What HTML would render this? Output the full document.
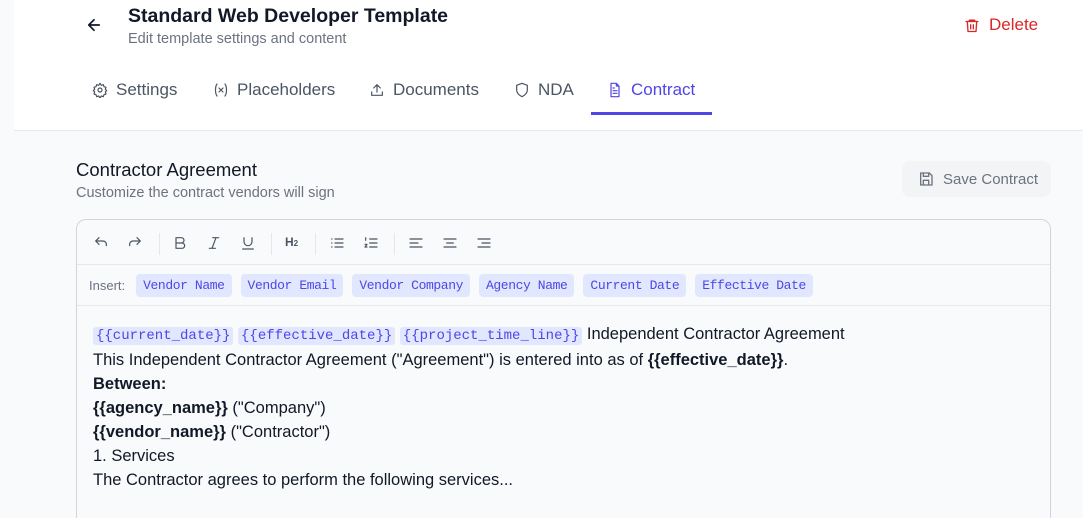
<!DOCTYPE html>
<html><head><style>
*{box-sizing:border-box;margin:0;padding:0}
html,body{width:1083px;height:518px;overflow:hidden}
body{background:#f9fafb;font-family:"Liberation Sans",sans-serif;position:relative}
.hdr{position:absolute;left:14px;top:0;width:1069px;height:131px;background:#fff;border-bottom:1px solid #e5e7eb}
.abs{position:absolute}
.tab{position:absolute;top:80px;font-size:17px;color:#4b5563;display:flex;align-items:center;gap:8px}
.tab svg{width:16px;height:16px;fill:none;stroke:currentColor;stroke-width:1.8;stroke-linecap:round;stroke-linejoin:round}
.ed{position:absolute;left:76px;top:219px;width:975px;height:310px;border:1px solid #d1d5db;border-radius:10px;background:#f9fafb;overflow:hidden}
.tb{height:45px;border-bottom:1px solid #e5e7eb;position:relative}
.tb svg{position:absolute;top:15px;width:16px;height:16px;fill:none;stroke:#4b5563;stroke-width:1.8;stroke-linecap:round;stroke-linejoin:round}
.sep{position:absolute;top:13px;width:1px;height:22px;background:#e5e7eb}
.ins{height:41px;border-bottom:1px solid #e5e7eb;position:relative;display:flex;align-items:center;padding-left:12px;gap:9px}
.chip{background:#e0e7ff;color:#4f46e5;font-family:"Liberation Mono",monospace;font-size:13px;letter-spacing:-0.4px;padding:4px 7px;border-radius:4px}
.ct{padding:16px 16px;font-size:16.5px;color:#111827;line-height:24px}
.ph{background:#e0e7ff;color:#4f46e5;font-family:"Liberation Mono",monospace;font-size:14px;padding:1px 3px;border-radius:3px}
</style></head><body>
<div class="hdr"></div>
<svg class="abs" style="left:85px;top:16px" width="18" height="18" viewBox="0 0 24 24" fill="none" stroke="#111827" stroke-width="2.2" stroke-linecap="round" stroke-linejoin="round"><path d="M19 12H5M12 19l-7-7 7-7"/></svg>
<div class="abs" style="left:128px;top:5px;font-size:19.5px;font-weight:bold;color:#111827">Standard Web Developer Template</div>
<div class="abs" style="left:128px;top:31px;font-size:14.5px;color:#6b7280">Edit template settings and content</div>
<div class="abs" style="left:964px;top:15px;font-size:17px;color:#dc2626;display:flex;align-items:center;gap:9px"><svg width="16" height="17" viewBox="0 0 24 24" fill="none" stroke="#dc2626" stroke-width="2" stroke-linecap="round" stroke-linejoin="round"><path d="M3 6h18M8 6V4h8v2M5 6l1 15h12l1-15M10 11v6M14 11v6"/></svg>Delete</div>

<div class="tab" style="left:92px"><svg viewBox="0 0 24 24"><circle cx="12" cy="12" r="3"/><path d="M12 2l2 3 3-1 1 3 3 1-1 3 2 2-2 2 1 3-3 1-1 3-3-1-2 3-2-3-3 1-1-3-3-1 1-3-2-2 2-2-1-3 3-1 1-3 3 1z"/></svg>Settings</div>
<div class="tab" style="left:213px"><svg viewBox="0 0 24 24"><path d="M6 3C3 7 3 17 6 21M18 3c3 4 3 14 0 18M9 9l6 6M15 9l-6 6"/></svg>Placeholders</div>
<div class="tab" style="left:369px"><svg viewBox="0 0 24 24"><path d="M4 15v5h16v-5M12 15V4M7 9l5-5 5 5"/></svg>Documents</div>
<div class="tab" style="left:514px"><svg viewBox="0 0 24 24"><path d="M12 2l8 3v7c0 5-4 8-8 10-4-2-8-5-8-10V5z"/></svg>NDA</div>
<div class="tab" style="left:607px;color:#4f46e5"><svg viewBox="0 0 24 24"><path d="M14 2H6v20h12V6zM14 2v4h4M9 13h6M9 17h6M9 9h2"/></svg>Contract</div>
<div class="abs" style="left:591px;top:112px;width:121px;height:3px;background:#4f46e5"></div>

<div class="abs" style="left:76px;top:159px;font-size:18.5px;color:#111827">Contractor Agreement</div>
<div class="abs" style="left:76px;top:185px;font-size:14.5px;color:#6b7280">Customize the contract vendors will sign</div>
<div class="abs" style="left:902px;top:161px;width:149px;height:36px;background:#f3f4f6;border-radius:8px;display:flex;align-items:center;gap:9px;padding-left:16px;font-size:15px;color:#6b7280"><svg width="16" height="16" viewBox="0 0 24 24" fill="none" stroke="#6b7280" stroke-width="2" stroke-linejoin="round"><path d="M4 3h13l4 4v14H4zM8 3v5h8V3M8 21v-7h8v7"/></svg>Save Contract</div>

<div class="ed">
<div class="tb">
<svg style="left:16px" viewBox="0 0 24 24"><path d="M9 14L4 9l5-5M4 9h11a5 5 0 0 1 5 5v2"/></svg>
<svg style="left:50px" viewBox="0 0 24 24"><path d="M15 14l5-5-5-5M20 9H9a5 5 0 0 0-5 5v2"/></svg>
<div class="sep" style="left:82px"></div>
<svg style="left:95px" viewBox="0 0 24 24"><path d="M6 4h8a4 4 0 0 1 0 8H6zM6 12h9a4 4 0 0 1 0 8H6z"/></svg>
<svg style="left:129px" viewBox="0 0 24 24"><path d="M10 4h9M5 20h9M15 4L9 20"/></svg>
<svg style="left:163px" viewBox="0 0 24 24"><path d="M6 4v6a6 6 0 0 0 12 0V4M4 21h16"/></svg>
<div class="sep" style="left:194px"></div>
<div style="position:absolute;left:208px;top:15px;font-size:12px;color:#4b5563;font-weight:bold">H<span style="font-size:8px">2</span></div>
<div class="sep" style="left:238px"></div>
<svg style="left:252px" viewBox="0 0 24 24"><path d="M9 6h12M9 12h12M9 18h12M4 6h.5M4 12h.5M4 18h.5"/></svg>
<svg style="left:286px" viewBox="0 0 24 24"><path d="M10 6h11M10 12h11M10 18h11M4 4v4M3 14h3l-3 4h3"/></svg>
<div class="sep" style="left:317px"></div>
<svg style="left:331px" viewBox="0 0 24 24"><path d="M3 6h18M3 12h12M3 18h18"/></svg>
<svg style="left:365px" viewBox="0 0 24 24"><path d="M3 6h18M7 12h10M3 18h18"/></svg>
<svg style="left:399px" viewBox="0 0 24 24"><path d="M3 6h18M9 12h12M3 18h18"/></svg>
</div>
<div class="ins"><span style="font-size:13px;color:#6b7280;margin-right:2px">Insert:</span><span class="chip">Vendor Name</span><span class="chip">Vendor Email</span><span class="chip">Vendor Company</span><span class="chip">Agency Name</span><span class="chip">Current Date</span><span class="chip">Effective Date</span></div>
<div class="ct">
<div><span class="ph">{{current_date}}</span> <span class="ph">{{effective_date}}</span> <span class="ph">{{project_time_line}}</span> Independent Contractor Agreement</div>
<div>This Independent Contractor Agreement ("Agreement") is entered into as of <b>{{effective_date}}</b>.</div>
<div><b>Between:</b></div>
<div><b>{{agency_name}}</b> ("Company")</div>
<div><b>{{vendor_name}}</b> ("Contractor")</div>
<div>1. Services</div>
<div>The Contractor agrees to perform the following services...</div>
</div>
</div>
</body></html>
